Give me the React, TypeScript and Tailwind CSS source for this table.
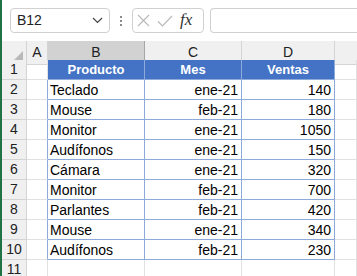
import React from "react";

const rows = [
  ["Teclado", "ene-21", "140"],
  ["Mouse", "feb-21", "180"],
  ["Monitor", "ene-21", "1050"],
  ["Audífonos", "ene-21", "150"],
  ["Cámara", "ene-21", "320"],
  ["Monitor", "feb-21", "700"],
  ["Parlantes", "feb-21", "420"],
  ["Mouse", "ene-21", "340"],
  ["Audífonos", "feb-21", "230"],
];

const grid = "grid grid-cols-[25px_21px_97px_97px_93px_1fr]";

const RowHead = ({ n }: { n: number }) => (
  <div className="h-5 bg-[#f0f0f0] border-r border-b border-[#d4d4d4] flex items-center justify-center text-[14px] text-[#222]">
    {n}
  </div>
);

const Blank = () => <div className="h-5 border-r border-b border-[#e1e1e1]" />;

export default function App() {
  return (
    <div className="w-[357px] h-[276px] overflow-hidden bg-white border-l-2 border-[#217346] font-['Liberation_Sans',Arial,sans-serif]">
      {/* formula bar */}
      <div className="h-[41px] flex items-start pt-2 pl-2 gap-0">
        <div className="w-[100px] h-[25px] rounded-[4px] border border-[#d1d1d1] flex items-center justify-between pl-[6px] pr-[6px] text-[14px] text-[#222]">
          <span>B12</span>
          <svg width="11" height="7" viewBox="0 0 11 7">
            <path d="M1 1l4.5 4.5L10 1" fill="none" stroke="#444" strokeWidth="1.2" />
          </svg>
        </div>
        <div className="w-[22px] h-[25px] flex flex-col items-center justify-center gap-[2px]">
          <span className="w-[2px] h-[2px] bg-[#8a8a8a]" />
          <span className="w-[2px] h-[2px] bg-[#8a8a8a]" />
          <span className="w-[2px] h-[2px] bg-[#8a8a8a]" />
        </div>
        <div className="w-[72px] h-[25px] rounded-[4px] border border-[#d1d1d1] flex items-center pl-[4px] gap-[7px]">
          <svg width="13" height="13" viewBox="0 0 13 13">
            <path d="M1 1l11 11M12 1L1 12" stroke="#b8b8b8" strokeWidth="1.1" />
          </svg>
          <svg width="16" height="12" viewBox="0 0 16 12">
            <path d="M1 6.5l4.5 4.5L15 1" fill="none" stroke="#b8b8b8" strokeWidth="1.1" />
          </svg>
          <span className="font-['Liberation_Serif',serif] italic text-[17px] text-[#333] leading-none -mt-[2px]">fx</span>
        </div>
        <div className="ml-[6px] flex-1 h-[25px] rounded-l-[4px] border border-r-0 border-[#d1d1d1]" />
      </div>

      {/* column headers */}
      <div className={`${grid} h-[19px] text-[14px] text-[#222]`}>
        <div className="bg-[#f0f0f0] border-r border-b border-[#d4d4d4] flex items-end justify-end pr-[3px] pb-[3px]">
          <svg width="10" height="10" viewBox="0 0 10 10">
            <path d="M10 0V10H0Z" fill="#b9b9b9" />
          </svg>
        </div>
        <div className="bg-[#f0f0f0] border-r border-b border-[#d4d4d4] flex items-center justify-center">A</div>
        <div className="bg-[#d2d2d2] border-r border-[#a6a6a6] border-b-2 border-b-[#217346] flex items-center justify-center pt-[1px]">B</div>
        <div className="bg-[#f0f0f0] border-r border-b border-[#d4d4d4] flex items-center justify-center">C</div>
        <div className="bg-[#f0f0f0] border-r border-b border-[#d4d4d4] flex items-center justify-center">D</div>
        <div className="bg-[#f0f0f0] border-b border-[#d4d4d4]" />
      </div>

      {/* row 1: table header */}
      <div className={`${grid} text-[13px]`}>
        <RowHead n={1} />
        <Blank />
        <div className="h-5 bg-[#4472c4] border-r border-b border-[#8eaadb] flex items-center justify-center font-bold text-white">Producto</div>
        <div className="h-5 bg-[#4472c4] border-r border-b border-[#8eaadb] flex items-center justify-center font-bold text-white">Mes</div>
        <div className="h-5 bg-[#4472c4] border-r border-b border-[#8eaadb] flex items-center justify-center font-bold text-white">Ventas</div>
        <Blank />
      </div>

      {rows.map((r, i) => (
        <div key={i} className={`${grid} text-[14px] text-black`}>
          <RowHead n={i + 2} />
          <div className="h-5 border-r border-b border-[#e1e1e1] border-r-[#8eaadb]" />
          <div className="h-5 border-r border-b border-[#8eaadb] flex items-center pl-[2px] pt-[1px]">{r[0]}</div>
          <div className="h-5 border-r border-b border-[#8eaadb] flex items-center justify-end pr-[3px] pt-[1px]">{r[1]}</div>
          <div className="h-5 border-r border-b border-[#8eaadb] flex items-center justify-end pr-[3px] pt-[1px]">{r[2]}</div>
          <Blank />
        </div>
      ))}

      <div className={`${grid}`}>
        <RowHead n={11} />
        <Blank />
        <Blank />
        <Blank />
        <Blank />
        <Blank />
      </div>
    </div>
  );
}
